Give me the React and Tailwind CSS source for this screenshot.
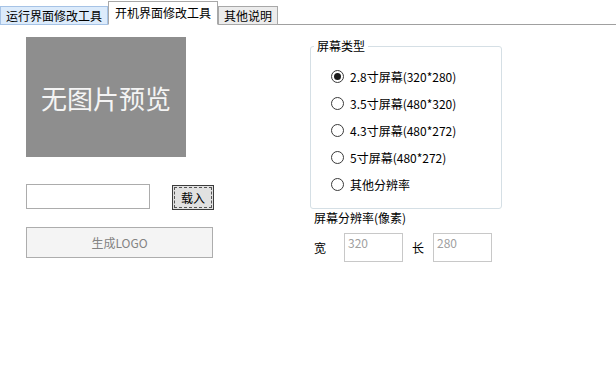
import { useState } from 'react';

const font = { fontFamily: '"Noto Sans CJK SC", "Noto Sans", sans-serif' };

const sizes = ['2.8寸屏幕(320*280)', '3.5寸屏幕(480*320)', '4.3寸屏幕(480*272)', '5寸屏幕(480*272)', '其他分辨率'];

function Radio({ checked, label, onClick }) {
  return (
    <div className="flex items-center h-[27px] cursor-default" onClick={onClick}>
      <span className="w-[13px] h-[13px] rounded-full border border-[#3a3a3a] bg-white flex items-center justify-center">
        {checked && <span className="w-[7px] h-[7px] rounded-full bg-[#1b1b1b]" />}
      </span>
      <span className="ml-[6px] text-[12px] text-black leading-none">{label}</span>
    </div>
  );
}

export default function App() {
  const [size, setSize] = useState(0);

  return (
    <div className="w-[616px] h-[385px] bg-white overflow-hidden text-[12px] text-black" style={font}>
      {/* tabs */}
      <div className="flex items-end h-[25px] border-b border-[#a0a0a0]">
        <div className="h-[19px] px-[5px] mb-[-1px] flex items-center bg-[#dcebfb] border border-[#a6c3e6] leading-none">运行界面修改工具</div>
        <div className="h-[24px] px-[6px] mb-[-1px] flex items-center bg-white border border-[#a8a8a8] border-b-white leading-none">开机界面修改工具</div>
        <div className="h-[19px] px-[5px] mb-[-1px] flex items-center bg-[#ececec] border border-[#a8a8a8] leading-none">其他说明</div>
      </div>

      <div className="flex">
        {/* left */}
        <div className="w-[310px] pl-[26px] pt-[12px]">
          <div className="w-[160px] h-[120px] bg-[#8e8e8e] flex items-center justify-center text-[26px] text-[#f4f4f4]">无图片预览</div>
          <div className="flex mt-[27px]">
            <div className="w-[124px] h-[25px] border border-[#acacac] bg-white" />
            <div className="ml-[22px] mt-[1px] w-[42px] h-[25px] border border-[#3c3c3c] bg-[#e1e1e1] p-[1px]">
              <div className="w-full h-full border border-dashed border-[#555] flex items-center justify-center leading-none">载入</div>
            </div>
          </div>
          <div className="mt-[17px] w-[187px] h-[31px] border border-[#adadad] bg-[#f4f4f4] flex items-center justify-center text-[#838383] leading-none">生成LOGO</div>
        </div>

        {/* right */}
        <div className="w-[200px]">
          <fieldset className="mt-[14px] w-[192px] h-[170px] border border-[#d5dfe5] rounded-[3px] p-0">
            <legend className="ml-[3px] px-[3px] text-[12px] leading-[14px]">屏幕类型</legend>
            <div className="pl-[20px] pt-[10px]">
              {sizes.map((s, i) => (
                <Radio key={s} label={s} checked={size === i} onClick={() => setSize(i)} />
              ))}
            </div>
          </fieldset>
          <div className="pl-[4px] mt-[2px] leading-[14px]">屏幕分辨率(像素)</div>
          <div className="flex items-center pl-[4px] mt-[8px]">
            <span className="w-[30px]">宽</span>
            <div className="w-[59px] h-[29px] border border-[#c8c8c8] px-[3px] pt-[2px] text-[#a0a0a0] leading-[14px]">320</div>
            <span className="ml-[9px] w-[21px]">长</span>
            <div className="w-[59px] h-[29px] border border-[#c8c8c8] px-[3px] pt-[2px] text-[#a0a0a0] leading-[14px]">280</div>
          </div>
        </div>
      </div>
    </div>
  );
}
